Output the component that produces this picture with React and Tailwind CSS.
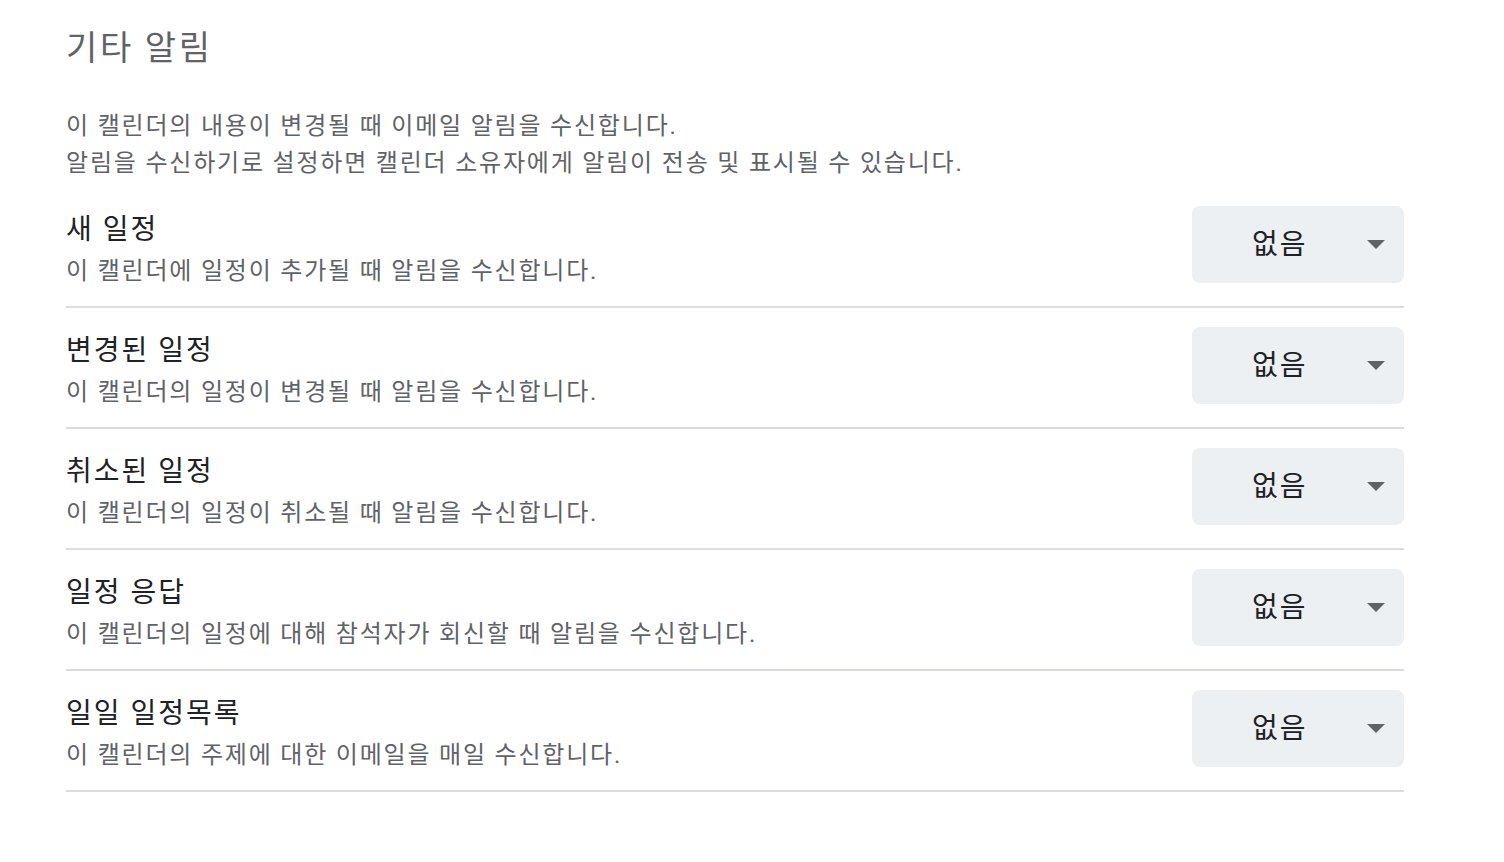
import React from "react";

const rows = [
  { title: "새 일정", desc: "이 캘린더에 일정이 추가될 때 알림을 수신합니다." },
  { title: "변경된 일정", desc: "이 캘린더의 일정이 변경될 때 알림을 수신합니다." },
  { title: "취소된 일정", desc: "이 캘린더의 일정이 취소될 때 알림을 수신합니다." },
  { title: "일정 응답", desc: "이 캘린더의 일정에 대해 참석자가 회신할 때 알림을 수신합니다." },
  { title: "일일 일정목록", desc: "이 캘린더의 주제에 대한 이메일을 매일 수신합니다." },
];

function Select() {
  return (
    <button className="flex items-center w-[212px] h-[77px] shrink-0 rounded-lg bg-[#edf0f2] pl-[60px] pr-[19px] text-[28px] tracking-[2px] text-[#202124]">
      <span>없음</span>
      <svg className="ml-auto" width="18" height="9" viewBox="0 0 18 9">
        <path d="M0 0 L18 0 L9 9 Z" fill="#5f6368" />
      </svg>
    </button>
  );
}

export default function App() {
  return (
    <div
      className="w-[1504px] h-[862px] bg-white pl-[66px] pr-[100px] pt-[24px]"
      style={{ fontFamily: '"Roboto", "Noto Sans CJK KR", sans-serif' }}
    >
      <h1 className="text-[34px] leading-[48px] tracking-[2.6px] text-[#5f6368]">기타 알림</h1>

      <div className="mt-[36px] mb-[5px] text-[24px] leading-[37px] tracking-[1.8px] text-[#5f6368]">
        <p>이 캘린더의 내용이 변경될 때 이메일 알림을 수신합니다.</p>
        <p>알림을 수신하기로 설정하면 캘린더 소유자에게 알림이 전송 및 표시될 수 있습니다.</p>
      </div>

      <div className="w-[1338px]">
        {rows.map((r) => (
          <div
            key={r.title}
            className="flex items-start justify-between pt-[19px] pb-[17px] border-b-2 border-[#dadce0]"
          >
            <div className="mt-[6px]">
              <div className="text-[28px] leading-[36px] tracking-[2px] text-[#202124]">{r.title}</div>
              <div className="mt-[5px] text-[24px] leading-[36px] tracking-[1.8px] text-[#5f6368]">{r.desc}</div>
            </div>
            <Select />
          </div>
        ))}
      </div>
    </div>
  );
}
